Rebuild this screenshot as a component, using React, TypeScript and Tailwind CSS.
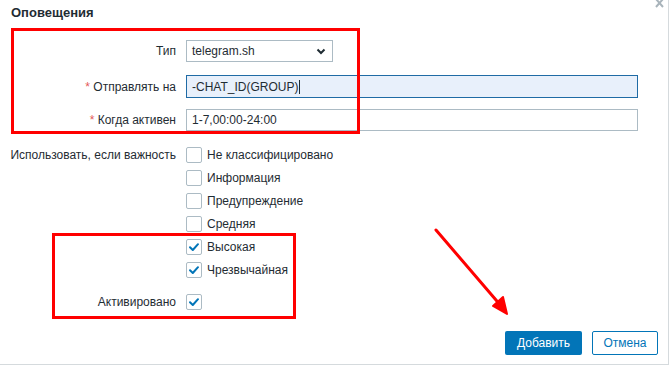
import React from "react";

function Check({ checked }: { checked?: boolean }) {
    return (
        <span className="flex h-4 w-4 shrink-0 items-center justify-center rounded-[2px] border border-[#acbbc4] bg-white">
            {checked && (
                <svg width="12" height="12" viewBox="0 0 12 12" fill="none">
                    <path d="M2 6.2 L4.8 9 L10 3.2" stroke="#0275b8" strokeWidth="2" strokeLinecap="round" strokeLinejoin="round" />
                </svg>
            )}
        </span>
    );
}

const severities = [
    { name: "Не классифицировано", checked: false },
    { name: "Информация", checked: false },
    { name: "Предупреждение", checked: false },
    { name: "Средняя", checked: false },
    { name: "Высокая", checked: true },
    { name: "Чрезвычайная", checked: true },
];

export default function App() {
    return (
        <div className="relative h-[366px] w-[670px] overflow-hidden bg-white font-['Liberation_Sans',Arial,sans-serif] text-[12px] text-[#1f2c33]">
            <div className="h-[365px] w-[669px] border-b border-r border-[#d5dadd]">
                {/* ── Header ── */}
                <div className="pl-[11px] pt-[5px] text-[13px] font-bold leading-[15px]">Оповещения</div>

                {/* ── Form ── */}
                <div className="mt-[20px]">
                    <div className="flex h-[22px] items-center">
                        <label className="w-[176px] text-right">Тип</label>
                        <div className="ml-[10px] flex h-[22px] w-[147px] items-center justify-between border border-[#acbbc4] bg-white pl-[5px] pr-[6px]">
                            <span>telegram.sh</span>
                            <svg width="10" height="7" viewBox="0 0 10 7" fill="none">
                                <path d="M1.5 1.5 L5 5 L8.5 1.5" stroke="#1f2c33" strokeWidth="2" />
                            </svg>
                        </div>
                    </div>

                    <div className="mt-[13px] flex h-[23px] items-center">
                        <label className="w-[176px] text-right">
                            <span className="text-[#e45959]">*</span> Отправлять на
                        </label>
                        <div className="ml-[10px] flex h-[23px] w-[452px] items-center border border-[#1f6ba5] bg-[#e8f0fb] pl-[5px]">
                            <span>-CHAT_ID(GROUP)</span>
                            <span className="ml-px h-[14px] w-px bg-[#1f2c33]" />
                        </div>
                    </div>

                    <div className="mt-[11px] flex h-[22px] items-center">
                        <label className="w-[176px] text-right">
                            <span className="text-[#e45959]">*</span> Когда активен
                        </label>
                        <div className="ml-[10px] flex h-[22px] w-[452px] items-center border border-[#acbbc4] bg-white pl-[5px]">
                            1-7,00:00-24:00
                        </div>
                    </div>

                    <div className="mt-[16px] flex">
                        <label className="w-[176px] text-right leading-4">Использовать, если важность</label>
                        <div className="ml-[10px] flex flex-col gap-[7px]">
                            {severities.map((s) => (
                                <div key={s.name} className="flex h-4 items-center gap-[5px]">
                                    <Check checked={s.checked} />
                                    <span>{s.name}</span>
                                </div>
                            ))}
                        </div>
                    </div>

                    <div className="mt-[16px] flex h-4 items-center">
                        <label className="w-[176px] text-right">Активировано</label>
                        <div className="ml-[10px]">
                            <Check checked />
                        </div>
                    </div>

                    {/* ── Footer buttons ── */}
                    <div className="mt-[21px] flex justify-end gap-[10px] pr-[10px]">
                        <button className="h-6 w-[77px] rounded-[2px] bg-[#0275b8] text-[12px] text-white">Добавить</button>
                        <button className="h-6 w-[66px] rounded-[2px] border border-[#0275b8] bg-white text-[12px] text-[#0275b8]">Отмена</button>
                    </div>
                </div>
            </div>

            {/* Close icon */}
            <svg className="absolute left-[655px] top-0" width="9" height="8" viewBox="0 0 9 8" fill="none">
                <path d="M1 -1 L8 7 M8 -1 L1 7" stroke="#a9b4bb" strokeWidth="2" />
            </svg>

            {/* ── Annotations ── */}
            <div className="pointer-events-none absolute left-[11px] top-[28px] h-[106px] w-[349px] border-[3px] border-[#ff0000]" />
            <div className="pointer-events-none absolute left-[52px] top-[233px] h-[86px] w-[244px] border-[3px] border-[#ff0000]" />
            <svg className="pointer-events-none absolute left-0 top-0" width="670" height="366" viewBox="0 0 670 366" fill="none">
                <line x1="436" y1="230" x2="502" y2="307" stroke="#ff0000" strokeWidth="3" strokeLinecap="round" />
                <path d="M507 314 L493 306 L503 297 Z" fill="#ff0000" stroke="#ff0000" strokeWidth="2" strokeLinejoin="round" />
            </svg>
        </div>
    );
}
